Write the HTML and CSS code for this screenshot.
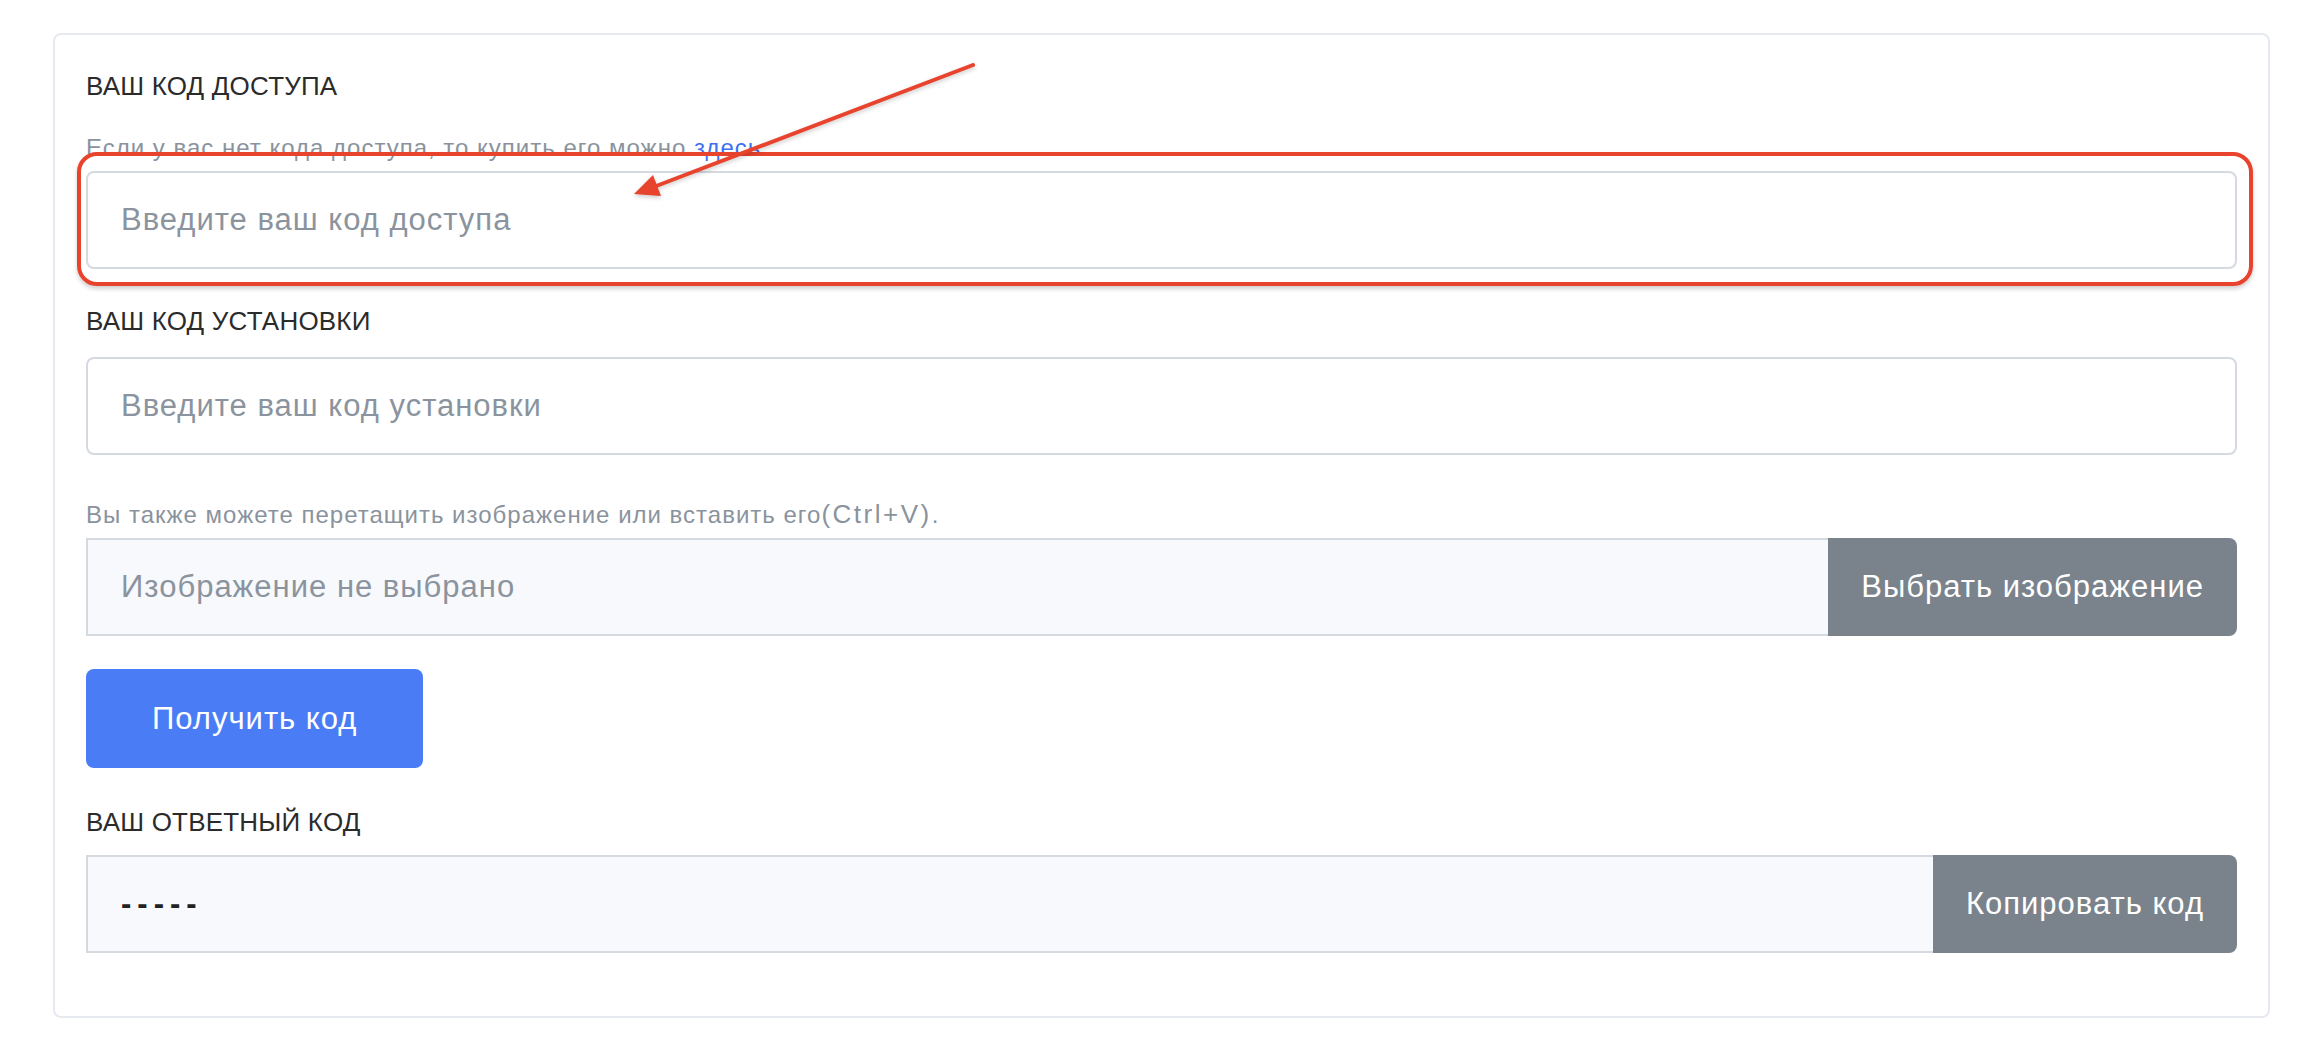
FILE: index.html
```html
<!DOCTYPE html>
<html lang="ru">
<head>
    <meta charset="UTF-8">
    <meta name="viewport" content="width=device-width, initial-scale=1.0">
    <title>Код активации</title>
    <link rel="stylesheet" href="styles.css">
</head>
<body>
    <div class="page">
        <div class="card">
            <!-- Access code -->
            <div class="field field-access">
                <div class="field-label">ВАШ КОД ДОСТУПА</div>
                <p class="hint hint-top">Если у вас нет кода доступа, то купить его можно <a href="#">здесь</a>.</p>
                <input class="text-input" type="text" placeholder="Введите ваш код доступа">
            </div>

            <!-- Install code -->
            <div class="field field-install">
                <div class="field-label">ВАШ КОД УСТАНОВКИ</div>
                <input class="text-input" type="text" placeholder="Введите ваш код установки">
            </div>

            <!-- Image upload -->
            <div class="field field-upload">
                <p class="hint">Вы также можете перетащить изображение или вставить его<span class="hotkey">(Ctrl+V)</span>.</p>
                <div class="input-group">
                    <div class="group-value placeholder">Изображение не выбрано</div>
                    <button class="group-btn">Выбрать изображение</button>
                </div>
            </div>

            <button class="primary-btn">Получить код</button>

            <!-- Response code -->
            <div class="field field-response">
                <div class="field-label">ВАШ ОТВЕТНЫЙ КОД</div>
                <div class="input-group">
                    <div class="group-value code">-----</div>
                    <button class="group-btn">Копировать код</button>
                </div>
            </div>

            <!-- Screenshot annotation -->
            <div class="mark-box"></div>
            <svg class="mark-arrow" width="1000" height="200" viewBox="0 0 1000 200">
                <line x1="920" y1="32" x2="598" y2="155" stroke="#e8432d" stroke-width="4" stroke-linecap="round"/>
                <polygon points="581,161 600,142 608,163" fill="#e8432d"/>
            </svg>
        </div>
    </div>
</body>
</html>
```

FILE: styles.css
```css
/* Page */
body {
    margin: 0;
    background: #fff;
    font-family: "Liberation Sans", Arial, sans-serif;
    color: #2b2b2b;
}

.page {
    padding: 33px 40px 32px 53px;
}

.card {
    position: relative;
    border: 2px solid #e6eaf0;
    border-radius: 8px;
    padding: 36px 31px 63px;
    display: flex;
    flex-direction: column;
    align-items: stretch;
}

/* Fields */
.field-label {
    font-size: 26px;
    line-height: 31px;
    color: #2b2b2b;
    margin-bottom: 20px;
    letter-spacing: 0.2px;
}

.hint {
    margin: 0 0 9px;
    font-size: 24px;
    line-height: 28px;
    letter-spacing: 1px;
    color: #8a939d;
}

.hint-top {
    margin-top: 32px;
}

.hint a {
    color: #3f70f2;
    text-decoration: none;
}

.hotkey {
    font-size: 26px;
    letter-spacing: 2.5px;
}

.field-install {
    margin-top: 37px;
}

.field-upload {
    margin-top: 45px;
}

.field-response {
    margin-top: 39px;
}

.field-response .field-label {
    margin-bottom: 17px;
}

.text-input {
    display: block;
    width: 100%;
    box-sizing: border-box;
    height: 98px;
    padding: 0 33px;
    border: 2px solid #d5dae1;
    border-radius: 8px;
    background: #fff;
    font-family: "Liberation Sans", Arial, sans-serif;
    font-size: 31px;
    letter-spacing: 1px;
    color: #2b2b2b;
    outline: none;
}

.text-input::placeholder {
    color: #8b949e;
}

/* Input groups */
.input-group {
    display: flex;
    height: 98px;
}

.group-value {
    flex: 1;
    display: flex;
    align-items: center;
    padding: 0 33px;
    background: #f7f9fc;
    border: 2px solid #d5dae1;
    border-right: none;
    font-size: 31px;
    letter-spacing: 1px;
}

.group-value.placeholder {
    color: #8b949e;
}

.group-value.code {
    color: #222;
    font-weight: bold;
    letter-spacing: 6px;
}

.group-btn {
    border: none;
    background: #7a838c;
    color: #fff;
    font-family: "Liberation Sans", Arial, sans-serif;
    font-size: 31px;
    letter-spacing: 1px;
    padding: 0 33px;
    border-radius: 0 8px 8px 0;
}

/* Main button */
.primary-btn {
    align-self: flex-start;
    margin-top: 33px;
    height: 99px;
    padding: 0 66px;
    border: none;
    border-radius: 8px;
    background: #4a7df5;
    color: #fff;
    font-family: "Liberation Sans", Arial, sans-serif;
    font-size: 31px;
    letter-spacing: 1px;
}

/* Annotation drawn over the screenshot */
.mark-box {
    position: absolute;
    left: 22px;
    top: 117px;
    width: 2168px;
    height: 126px;
    border: 4px solid #e8432d;
    border-radius: 20px;
    box-shadow: 0 3px 4px rgba(0, 0, 0, 0.18);
    pointer-events: none;
}

.mark-arrow {
    position: absolute;
    left: -2px;
    top: -2px;
    overflow: visible;
    filter: drop-shadow(0 2px 2px rgba(0, 0, 0, 0.2));
    pointer-events: none;
}
```
